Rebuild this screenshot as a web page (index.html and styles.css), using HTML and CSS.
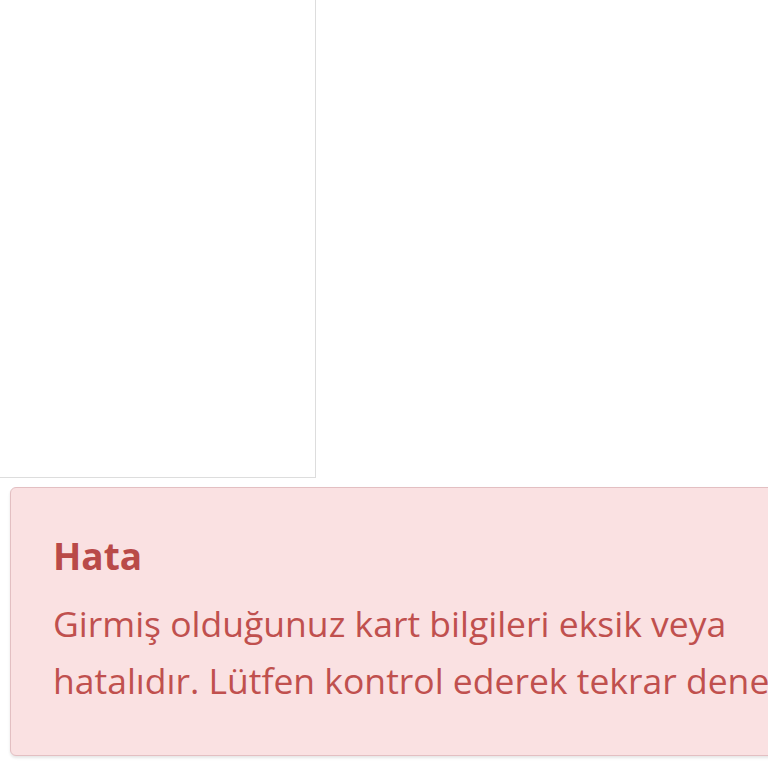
FILE: index.html
```html
<!DOCTYPE html>
<html lang="tr">
<head>
<meta charset="utf-8">
<link rel="stylesheet" href="styles.css">
</head>
<body>
<div class="page">
  <div class="panel"></div>
  <div class="alert">
    <h4 class="alert-title">Hata</h4>
    <p class="alert-text">Girmiş olduğunuz kart bilgileri eksik veya hatalıdır. Lütfen kontrol ederek tekrar deneyiniz.</p>
  </div>
</div>
</body>
</html>
```
FILE: styles.css
```css
html, body {
  margin: 0;
  padding: 0;
  background: #ffffff;
  overflow: hidden;
  width: 768px;
  height: 768px;
}
.page {
  font-family: "Open Sans", "Liberation Sans", sans-serif;
  width: 1000px;
}
.panel {
  width: 315px;
  height: 477px;
  border-right: 1px solid #dddddd;
  border-bottom: 1px solid #dddddd;
}
.alert {
  margin: 9px 0 0 10px;
  width: 896px;
  box-sizing: border-box;
  padding: 46px 42px 46px 42px;
  background: #fae1e2;
  border: 1px solid #e3bfc2;
  border-radius: 6px;
  box-shadow: 0 2px 3px rgba(0,0,0,0.10);
  color: #c0504e;
}
.alert-title {
  margin: 0 0 17px 0;
  font-size: 37px;
  line-height: 44px;
  font-weight: 700;
  color: #b94a48;
}
.alert-text {
  margin: 0;
  font-size: 35.5px;
  line-height: 57px;
}
```
